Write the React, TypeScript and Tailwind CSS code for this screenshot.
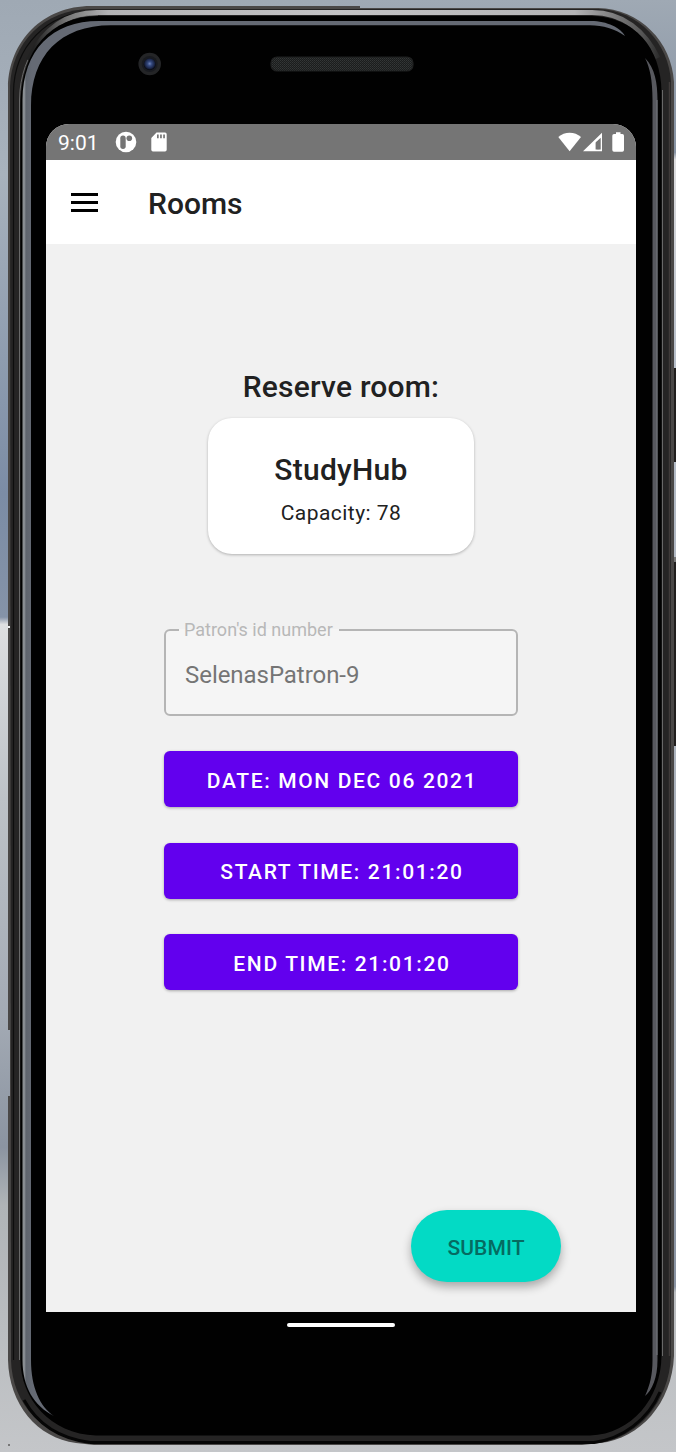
import type { ReactNode } from "react";

function DeviceFrame() {
  return (
    <svg className="pointer-events-none absolute inset-0" width="676" height="1452" viewBox="0 0 676 1452" aria-hidden="true">
      <defs>
        <linearGradient id="leftSky" x1="0" y1="0" x2="0" y2="1">
          <stop offset="0" stopColor="#9fa9b4" />
          <stop offset="0.12" stopColor="#a8b2bd" />
          <stop offset="0.34" stopColor="#7b8ca5" />
          <stop offset="0.425" stopColor="#8593a8" />
          <stop offset="0.43" stopColor="#dedfe1" />
          <stop offset="0.55" stopColor="#bdc2c7" />
          <stop offset="0.7" stopColor="#a3aab4" />
          <stop offset="0.79" stopColor="#8b94a1" />
          <stop offset="0.83" stopColor="#b0b4b7" />
          <stop offset="1" stopColor="#c4c6c9" />
        </linearGradient>
        <linearGradient id="rightSky" x1="0" y1="0" x2="0" y2="1">
          <stop offset="0" stopColor="#9fa9b4" />
          <stop offset="0.105" stopColor="#8793a3" />
          <stop offset="0.11" stopColor="#dddddf" />
          <stop offset="0.25" stopColor="#b6bec9" />
          <stop offset="0.6" stopColor="#a9b0ba" />
          <stop offset="0.886" stopColor="#8993a2" />
          <stop offset="0.89" stopColor="#babdc0" />
          <stop offset="1" stopColor="#c4c6c9" />
        </linearGradient>
        <linearGradient id="topShine" x1="0" y1="0" x2="676" y2="0" gradientUnits="userSpaceOnUse">
          <stop offset="0.05" stopColor="#222222" />
          <stop offset="0.1" stopColor="#777777" />
          <stop offset="0.16" stopColor="#b3b3b5" />
          <stop offset="0.5" stopColor="#c3c3c5" />
          <stop offset="0.85" stopColor="#b4b4b6" />
          <stop offset="0.95" stopColor="#555555" />
          <stop offset="0.98" stopColor="#252525" />
        </linearGradient>
        <linearGradient id="leftEdge" x1="22" y1="0" x2="32" y2="0" gradientUnits="userSpaceOnUse">
          <stop offset="0" stopColor="#8f9394" />
          <stop offset="0.25" stopColor="#868b91" />
          <stop offset="0.4" stopColor="#5e646d" />
          <stop offset="1" stopColor="#656a74" />
        </linearGradient>
        <radialGradient id="lens" cx="0.5" cy="0.45" r="0.5">
          <stop offset="0" stopColor="#7184b8" />
          <stop offset="0.35" stopColor="#34497f" />
          <stop offset="0.8" stopColor="#1a2444" />
          <stop offset="1" stopColor="#090c16" />
        </radialGradient>
        <pattern id="mesh" width="2" height="2" patternUnits="userSpaceOnUse">
          <rect width="2" height="2" fill="#1b1d1d" />
          <rect width="1" height="1" fill="#343737" />
          <rect x="1" y="1" width="1" height="1" fill="#2c2f2f" />
        </pattern>
      </defs>
      <rect width="338" height="1452" fill="url(#leftSky)" />
      <rect x="338" width="338" height="1452" fill="url(#rightSky)" />
      <path d="M674 368h2v94h-2zM674 557h2v189h-2z" fill="#211f1e" />
      <path d="M674 557h2v5h-2z" fill="#777" />
      <path d="M8 87C9 41 43 6 91 6H360V8H598C640 9 672 42 674 82V1356C672 1403 640 1439 600 1443L582 1445H94L76 1443C37 1438 9 1404 8 1360V1096H10V1030H8Z" fill="#4a4847" />
      <path d="M10 87C11 43 44 9 91 9H598C638 10 669 43 671 82V1356C669 1402 638 1438 598 1443H91C44 1438 12 1405 11 1360Z" fill="#252424" />
      <path d="M13.5 1360V92C14 47 47 12 92 12" fill="none" stroke="#0d0d0d" strokeWidth="1.2" />
      <path d="M19.5 1360V100C20 52 50 15 98 15M662.5 90V1356" fill="none" stroke="#686868" strokeWidth="1" />
      <path d="M669.5 82V1356" stroke="#3f3a39" strokeWidth="1.5" />
      <path d="M90 1442.4C55 1438 35 1420 24 1400M90 1442.4H594C622 1439 648 1420 660 1392" fill="none" stroke="#060606" strokeWidth="3" />
      <path d="M28 60C43 30 66 12.5 97 12.5H592C623 12.5 645 31 658 58" fill="none" stroke="url(#topShine)" strokeWidth="4.8" />
      <path d="M20.5 105C21 50 50 16 99 16H590C635 16 661 48 661.5 92V1356C661 1398 632 1434 590 1435.5H96C50 1434 20.5 1398 20.5 1360Z" fill="#010101" />
      <path d="M54 1416C34 1406 22.5 1387 22.5 1360V100C23 50 52 21 99 21H591C607 21 621 28 625 36C615 29 603 25.3 590 25.3H111C60 25.3 31 56 31 106V1360C31 1387 40 1407 54 1416Z" fill="url(#leftEdge)" />
      <path d="M645 58C655 68 657.5 83 657.5 100V1360C657.5 1378 652 1390 645 1396C650 1385 652.5 1375 652.5 1360V100C652.5 80 650 68 645 58Z" fill="#57585e" />
      <path d="M657 100V1355" stroke="#77797e" strokeWidth="1" />
      <rect x="271" y="57" width="142" height="14" rx="6" fill="url(#mesh)" stroke="#1f2020" strokeWidth="1.2" />
      <circle cx="149.7" cy="64" r="11.3" fill="#242527" />
      <circle cx="149.7" cy="64" r="8" fill="#191b20" />
      <circle cx="149.7" cy="64.3" r="6" fill="url(#lens)" />
      <path d="M8 626h2v2H8z" fill="#eee" />
      <path d="M8 1444h2v2H8z" fill="#777" />
    </svg>
  );
}

function StatusBar() {
  return (
    <div className="flex h-9 items-center justify-between bg-[#757575] pr-[11px] pl-3 text-white">
      <div className="flex items-center">
        <span className="w-[57px] pt-[3px] text-[21px] leading-none">9:01</span>
        <svg width="22" height="22" viewBox="0 0 22 22">
          <circle cx="11" cy="11" r="10.3" fill="white" />
          <rect x="5.3" y="4.5" width="5.4" height="13.5" rx="2.7" fill="#757575" />
          <circle cx="14.3" cy="7.3" r="2.8" fill="#757575" />
        </svg>
        <svg className="ml-[14px]" width="16" height="20" viewBox="0 0 16 20">
          <path d="M5.5.5H14A1.7 1.7 0 0 1 15.7 2.2V17.8A1.7 1.7 0 0 1 14 19.5H2A1.7 1.7 0 0 1 .3 17.8V6Z" fill="white" />
          <path d="M6 2.5h1.7v3.7H6zM9.1 2.5h1.7v3.7H9.1zM12.2 2.5h1.7v3.7h-1.7z" fill="#757575" />
        </svg>
      </div>
      <svg width="67" height="20" viewBox="558 132 67 20" fill="white">
        <path d="M558.3 137C564.5 131.2 574.8 131.2 581 137L569.6 151.2Z" />
        <path fillRule="evenodd" d="M602 132.8V151.2H583ZM600.7 137.7L595.6 142.5V149.6H600.7Z" />
        <path d="M596.8 141.3h2.7v8h-2.7z" fill="#757575" />
        <path d="M616 132.3H620.5V134H622.3Q624 134 624 135.7V150Q624 151.7 622.3 151.7H614Q612.3 151.7 612.3 150V135.7Q612.3 134 614 134H616Z" />
      </svg>
    </div>
  );
}

function PickerButton({ children }: { children: ReactNode }) {
  return (
    <button className="h-14 w-full rounded-[6px] bg-[#6200ee] pt-1 pl-[2px] text-[21px] leading-none font-medium tracking-[1.65px] text-white shadow-[0_1px_3px_rgba(0,0,0,0.3)]">
      {children}
    </button>
  );
}

export default function App() {
  return (
    <main className="relative h-[1452px] w-[676px] overflow-hidden font-['Roboto',sans-serif] text-[#212121]">
      <DeviceFrame />
      <div className="relative flex h-full flex-col pt-[124px] pr-10 pl-[46px]">
        <section className="flex h-[1188px] flex-col overflow-hidden rounded-t-[23px] bg-[#f1f1f1]">
          <StatusBar />
          <header className="flex h-[84px] items-center bg-white pl-[25px]">
            <button aria-label="Menu" className="flex w-[27px] flex-col gap-[5px]">
              <span className="h-[3px] bg-black" />
              <span className="h-[3px] bg-black" />
              <span className="h-[3px] bg-black" />
            </button>
            <h1 className="ml-[50px] pt-[3px] text-[30px] leading-none font-medium">Rooms</h1>
          </header>

          <div className="flex flex-col items-center pt-[128px]">
            <h2 className="text-[30px] leading-[30px] font-medium tracking-[0.2px]">Reserve room:</h2>
            <article className="mt-4 flex h-[136px] w-[266px] flex-col items-center rounded-[24px] bg-white pt-[37px] shadow-[0_1px_3px_rgba(0,0,0,0.27)]">
              <h3 className="text-[30px] leading-[30px] font-medium tracking-[0.25px]">StudyHub</h3>
              <p className="mt-[18px] text-[21px] leading-[21px] tracking-[0.45px]">Capacity: 78</p>
            </article>
            <form className="mt-[66px] flex w-[354px] flex-col" onSubmit={(e) => e.preventDefault()}>
              <fieldset className="h-[96px] rounded-[6px] border-2 border-[#b5b5b5] bg-[#f5f5f5] pl-[13px]">
                <legend className="h-5 pr-[6px] pl-[5px] text-[18px] leading-[20px] text-[#b8b8b8]">Patron's id number</legend>
                <p className="mt-[21px] pl-[6px] text-[24px] leading-7 tracking-[-0.05px] text-[#757575]">SelenasPatron-9</p>
              </fieldset>
              <div className="mt-[35px] flex flex-col gap-[35.5px]">
                <PickerButton>DATE: MON DEC 06 2021</PickerButton>
                <PickerButton>START TIME: 21:01:20</PickerButton>
                <PickerButton>END TIME: 21:01:20</PickerButton>
              </div>
            </form>
          </div>

          <button className="mt-auto mr-[75px] mb-[30px] h-[72px] w-[150px] self-end rounded-full bg-[#03dac5] pt-1 text-[21px] leading-none font-medium tracking-[0.1px] text-[#056b61] shadow-[0_5px_10px_rgba(0,0,0,0.3)]">
            SUBMIT
          </button>
        </section>
        <div className="mt-[11px] h-[4px] w-[108px] self-center rounded-full bg-white" />
      </div>
    </main>
  );
}
